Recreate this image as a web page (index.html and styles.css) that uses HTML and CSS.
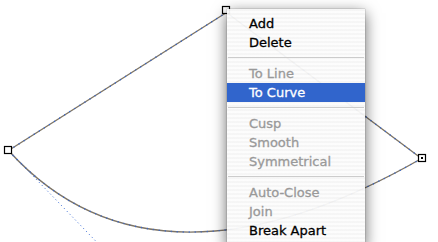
FILE: index.html
```html
<!DOCTYPE html>
<html lang="en">
<head>
    <meta charset="UTF-8">
    <title>Path Context Menu</title>
    <link rel="stylesheet" href="styles.css">
</head>
<body>
    <div class="canvas">
        <svg class="drawing" width="438" height="242" viewBox="0 0 438 242">
            <!-- path segments -->
            <g class="segment">
                <path d="M8.5,150.5 L226.5,12.5 L421.5,158.5"/>
                <path d="M8.5,150.5 C130,285 300,228 421.5,158.5"/>
            </g>
            <g class="segment-sel">
                <path d="M8.5,150.5 L226.5,12.5 L421.5,158.5"/>
                <path d="M8.5,150.5 C130,285 300,228 421.5,158.5"/>
            </g>
            <!-- control handle -->
            <path class="handle" d="M8.5,150.5 L112,258"/>
            <!-- anchor points -->
            <rect class="node" x="4.5" y="146.5" width="7" height="7"/>
            <rect class="node" x="418.5" y="154.5" width="7" height="7"/>
            <rect class="node-dot" x="421" y="157" width="2" height="2"/>
            <rect class="node" x="222.5" y="6.5" width="7" height="7"/>
        </svg>

        <ul class="menu">
            <li class="item">Add</li>
            <li class="item">Delete</li>
            <li class="sep"></li>
            <li class="item disabled">To Line</li>
            <li class="item active">To Curve</li>
            <li class="sep"></li>
            <li class="item disabled">Cusp</li>
            <li class="item disabled">Smooth</li>
            <li class="item disabled">Symmetrical</li>
            <li class="sep"></li>
            <li class="item disabled">Auto-Close</li>
            <li class="item disabled">Join</li>
            <li class="item">Break Apart</li>
        </ul>
    </div>
</body>
</html>
```

FILE: styles.css
```css
body {
    margin: 0;
    background-color: #fff;
    font-family: "DejaVu Sans", sans-serif;
}
.canvas {
    position: relative;
    width: 438px;
    height: 242px;
    overflow: hidden;
}
.drawing {
    display: block;
}
.segment path {
    fill: none;
    stroke: #7d7466;
    stroke-width: 1.4;
}
.segment-sel path {
    fill: none;
    stroke: #2f64d4;
    stroke-width: 1.4;
    stroke-dasharray: 1 5;
}
.handle {
    fill: none;
    stroke: #2f64d4;
    stroke-width: 1;
    stroke-dasharray: 1 3;
}
.node {
    fill: #fff;
    stroke: #000;
    stroke-width: 1.2;
}
.node-dot {
    fill: #000;
}
.menu {
    position: absolute;
    left: 227px;
    top: 9px;
    width: 138px;
    margin: 0;
    padding: 5px 0 6px;
    list-style: none;
    background: repeating-linear-gradient(to bottom, rgba(245, 245, 245, 0.94) 0, rgba(245, 245, 245, 0.94) 2px, rgba(252, 252, 252, 0.94) 2px, rgba(252, 252, 252, 0.94) 4px);
    box-shadow: 0 4px 14px rgba(0, 0, 0, 0.6), 0 0 1px rgba(0, 0, 0, 0.5);
}
.item {
    height: 19px;
    line-height: 19px;
    padding-left: 22px;
    font-size: 13px;
    color: #000;
    -webkit-text-stroke: 0.3px;
}
.item.disabled {
    color: #999;
}
.item.active {
    background-color: #3165cc;
    color: #fff;
}
.sep {
    height: 1px;
    margin: 5px 1px 6px;
    background-color: #cccccc;
}
```
